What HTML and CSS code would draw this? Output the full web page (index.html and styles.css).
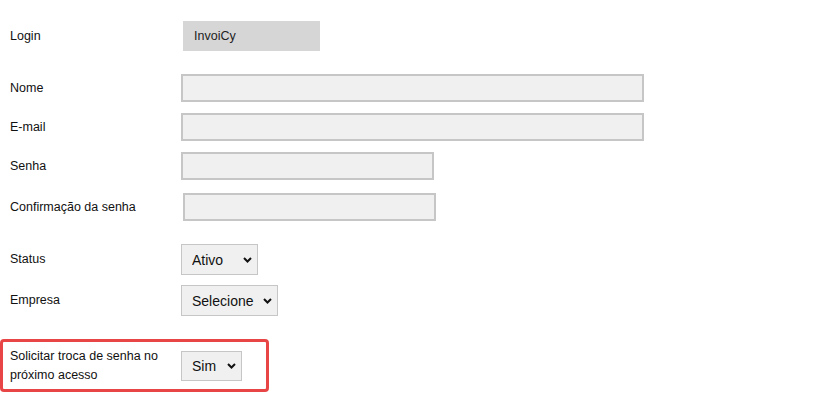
FILE: index.html
```html
<!DOCTYPE html>
<html lang="pt-BR">
<head>
  <meta charset="UTF-8">
  <title>Usuário</title>
  <link rel="stylesheet" href="styles.css">
</head>
<body>

<div class="user-form">

  <div class="row row-login">
    <label class="field-label">Login</label>
    <div class="login-value">InvoiCy</div>
  </div>

  <div class="row row-first">
    <label class="field-label" for="nome">Nome</label>
    <input type="text" id="nome" class="input-wide">
  </div>

  <div class="row row-tight">
    <label class="field-label" for="email">E-mail</label>
    <input type="text" id="email" class="input-wide">
  </div>

  <div class="row row-tight">
    <label class="field-label" for="senha">Senha</label>
    <input type="password" id="senha" class="input-short">
  </div>

  <div class="row row-confirm">
    <label class="field-label" for="confirma">Confirmação da senha</label>
    <input type="password" id="confirma" class="input-short input-shifted">
  </div>

  <div class="row row-select row-first">
    <label class="field-label" for="status">Status</label>
    <span class="select-wrap">
      <select id="status" class="select-status">
        <option>Ativo</option>
        <option>Inativo</option>
      </select>
      <svg class="chevron" width="9" height="6" viewBox="0 0 9 6"><path d="M1 1 L4.5 4.5 L8 1" fill="none" stroke="#111" stroke-width="2"/></svg>
    </span>
  </div>

  <div class="row row-select row-empresa">
    <label class="field-label" for="empresa">Empresa</label>
    <span class="select-wrap">
      <select id="empresa" class="select-empresa">
        <option>Selecione</option>
      </select>
      <svg class="chevron" width="9" height="6" viewBox="0 0 9 6"><path d="M1 1 L4.5 4.5 L8 1" fill="none" stroke="#111" stroke-width="2"/></svg>
    </span>
  </div>

  <div class="row highlight-row">
    <label class="field-label" for="troca">Solicitar troca de senha no próximo acesso</label>
    <span class="select-wrap">
      <select id="troca" class="select-sim">
        <option>Sim</option>
        <option>Não</option>
      </select>
      <svg class="chevron" width="9" height="6" viewBox="0 0 9 6"><path d="M1 1 L4.5 4.5 L8 1" fill="none" stroke="#111" stroke-width="2"/></svg>
    </span>
  </div>

</div>

</body>
</html>
```

FILE: styles.css
```css
body {
  font-family: "Liberation Sans", Arial, sans-serif;
  margin: 0;
  background-color: #fff;
  color: #111;
}

.user-form {
  display: flex;
  flex-direction: column;
  width: 823px;
}

.row {
  display: flex;
  align-items: center;
  padding-left: 10px;
}

.field-label {
  width: 171px;
  flex: none;
  font-size: 12.5px;
  line-height: 19px;
}

.row-login {
  margin-top: 21px;
}

.login-value {
  width: 126px;
  height: 30px;
  margin-left: 2px;
  padding-left: 11px;
  background-color: #d6d6d6;
  font-size: 12.5px;
  line-height: 30px;
  color: #222;
}

.row-first {
  margin-top: 23px;
}

.row-tight {
  margin-top: 11px;
}

.row-confirm {
  margin-top: 13px;
}

.row-empresa {
  margin-top: 10px;
}

input {
  box-sizing: border-box;
  height: 28px;
  margin: 0;
  padding: 0 6px;
  background-color: #f0f0f0;
  border: 2px solid #c6c6c6;
  font-family: inherit;
  font-size: 13px;
}

.input-wide {
  width: 463px;
}

.input-short {
  width: 253px;
}

.input-shifted {
  margin-left: 2px;
}

.select-wrap {
  position: relative;
  display: inline-block;
}

select {
  appearance: none;
  -webkit-appearance: none;
  box-sizing: border-box;
  height: 31px;
  margin: 0;
  padding: 0 0 0 10px;
  background-color: #f0f0f0;
  border: 1px solid #c6c6c6;
  border-radius: 0;
  font-family: inherit;
  font-size: 14px;
  color: #111;
}

.select-status {
  width: 77px;
}

.select-empresa {
  width: 97px;
}

.select-sim {
  width: 61px;
  height: 30px;
}

.chevron {
  position: absolute;
  right: 6px;
  top: 50%;
  margin-top: -3px;
  pointer-events: none;
}

.highlight-row {
  box-sizing: border-box;
  width: 269px;
  height: 53px;
  margin-top: 23px;
  padding-left: 7px;
  border: 3px solid #e84646;
  border-radius: 4px;
}
```
